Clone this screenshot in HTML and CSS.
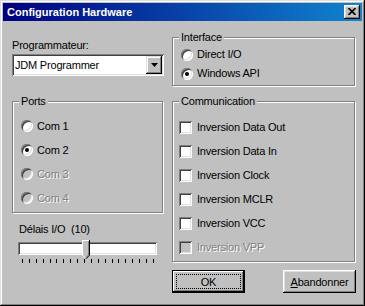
FILE: index.html
```html
<!DOCTYPE html>
<html lang="fr">
<head>
  <meta charset="UTF-8" />
  <title>Configuration Hardware</title>
  <link rel="stylesheet" href="styles.css">
</head>
<body>
<div class="window">
  <div class="titlebar">
    <span class="title">Configuration Hardware</span>
    <span class="close-btn">
      <svg width="8" height="7" viewBox="0 0 8 7"><path d="M0.5 0 L7.5 7 M7.5 0 L0.5 7" stroke="#000" stroke-width="1.7"/></svg>
    </span>
  </div>
  <div class="content">
    <div class="col-left">
      <div class="prog-label">Programmateur:</div>
      <div class="combo">
        <span class="combo-text">JDM Programmer</span>
        <span class="combo-btn">
          <svg width="7" height="4" viewBox="0 0 7 4"><path d="M0 0h7L3.5 4z" fill="#000"/></svg>
        </span>
      </div>
      <div class="group ports">
        <span class="legend">Ports</span>
        <div class="options">
          <div class="opt"><span class="radio"></span>Com 1</div>
          <div class="opt"><span class="radio checked"></span>Com 2</div>
          <div class="opt disabled"><span class="radio"></span>Com 3</div>
          <div class="opt disabled"><span class="radio"></span>Com 4</div>
        </div>
      </div>
      <div class="delay-label">Délais I/O&nbsp; (10)</div>
      <div class="slider-track">
        <svg class="thumb" width="8" height="19" viewBox="0 0 8 19">
          <path d="M0 0H8V15L4 19L0 15Z" fill="#c0c0c0"/>
          <path d="M0.5 15V0.5H7" stroke="#fff" fill="none"/>
          <path d="M6.5 1V15L3.5 18" stroke="#808080" fill="none"/>
          <path d="M7.5 0V15.2L4 18.7" stroke="#000" fill="none"/>
          <path d="M0.5 15L3.5 18" stroke="#fff" fill="none"/>
        </svg>
      </div>
      <div class="ticks">
        <span></span><span></span><span></span><span></span><span></span>
        <span></span><span></span><span></span><span></span><span></span>
        <span></span><span></span><span></span><span></span><span></span>
        <span></span><span></span><span></span><span></span><span></span>
      </div>
    </div>
    <div class="col-right">
      <div class="group interface">
        <span class="legend">Interface</span>
        <div class="options">
          <div class="opt"><span class="radio"></span>Direct I/O</div>
          <div class="opt"><span class="radio checked"></span>Windows API</div>
        </div>
      </div>
      <div class="group communication">
        <span class="legend">Communication</span>
        <div class="options">
          <div class="opt"><span class="check"></span>Inversion Data Out</div>
          <div class="opt"><span class="check"></span>Inversion Data In</div>
          <div class="opt"><span class="check"></span>Inversion Clock</div>
          <div class="opt"><span class="check"></span>Inversion MCLR</div>
          <div class="opt"><span class="check"></span>Inversion VCC</div>
          <div class="opt disabled"><span class="check"></span>Inversion VPP</div>
        </div>
      </div>
      <div class="buttons">
        <div class="btn default"><span class="focus">OK</span></div>
        <div class="btn"><span><u>A</u>bandonner</span></div>
      </div>
    </div>
  </div>
</div>
</body>
</html>
```

FILE: styles.css
```css
body {
  margin: 0;
  font-family: "Liberation Sans", Arial, sans-serif;
  font-size: 11px;
  letter-spacing: -0.2px;
  color: #000;
}
.window {
  width: 365px;
  height: 306px;
  box-sizing: border-box;
  padding: 3px;
  background: #c0c0c0;
  box-shadow: inset -1px -1px #000, inset 1px 1px #dfdfdf, inset -2px -2px #808080, inset 2px 2px #fff;
}
.titlebar {
  height: 18px;
  display: flex;
  align-items: center;
  justify-content: space-between;
  background: linear-gradient(90deg, #000080, #1084d0);
  padding: 0 2px 0 4px;
}
.title {
  color: #fff;
  font-weight: 700;
  letter-spacing: 0;
  line-height: 18px;
}
.close-btn {
  width: 16px;
  height: 14px;
  box-sizing: border-box;
  display: flex;
  align-items: center;
  justify-content: center;
  padding: 0 1px 1px 0;
  background: #c0c0c0;
  box-shadow: inset -1px -1px #000, inset 1px 1px #fff, inset -2px -2px #808080, inset 2px 2px #dfdfdf;
}
.content {
  display: flex;
  gap: 8px;
  padding: 0 6px 0 9px;
}
.col-left {
  width: 152px;
  display: flex;
  flex-direction: column;
}
.col-right {
  width: 184px;
  display: flex;
  flex-direction: column;
}
.prog-label {
  line-height: 13px;
  margin-top: 18px;
}
.combo {
  margin-top: 2px;
  height: 22px;
  box-sizing: border-box;
  padding: 2px;
  display: flex;
  align-items: center;
  justify-content: space-between;
  background: #fff;
  box-shadow: inset 1px 1px #808080, inset -1px -1px #fff, inset 2px 2px #404040, inset -2px -2px #dfdfdf;
}
.combo-text {
  padding-left: 1px;
  line-height: 13px;
}
.combo-btn {
  width: 16px;
  height: 18px;
  box-sizing: border-box;
  display: flex;
  align-items: center;
  justify-content: center;
  background: #c0c0c0;
  box-shadow: inset -1px -1px #000, inset 1px 1px #dfdfdf, inset -2px -2px #808080, inset 2px 2px #fff;
}

/* group boxes */
.group {
  box-sizing: border-box;
  border: 1px solid #808080;
  box-shadow: inset 1px 1px #fff, 1px 1px #fff;
}
.legend {
  display: block;
  width: fit-content;
  margin: -7px 0 0 6px;
  padding: 0 2px;
  line-height: 13px;
  background: #c0c0c0;
}
.opt {
  display: flex;
  align-items: center;
  line-height: 13px;
}
.ports {
  margin-top: 25px;
  width: 151px;
  height: 112px;
}
.ports .options {
  margin-top: 6px;
  padding-left: 8px;
}
.ports .opt {
  height: 24px;
}
.interface {
  margin-top: 16px;
  height: 49px;
  width: 183px;
}
.interface .options {
  margin-top: 1px;
  padding-left: 8px;
}
.interface .opt {
  height: 19px;
}
.communication {
  margin-top: 15px;
  height: 161px;
  width: 183px;
}
.communication .options {
  margin-top: 7px;
  padding-left: 6px;
}
.communication .opt {
  height: 24px;
}

.radio {
  width: 12px;
  height: 12px;
  flex: none;
  margin-right: 4px;
  border-radius: 50%;
  display: flex;
  align-items: center;
  justify-content: center;
  background: #fff;
  box-shadow: inset 1px 1px #808080, inset -1px -1px #fff, inset 2px 2px #404040, inset -2px -2px #dfdfdf;
}
.radio.checked::after {
  content: "";
  width: 4px;
  height: 4px;
  border-radius: 50%;
  background: #000;
}
.check {
  width: 13px;
  height: 13px;
  flex: none;
  margin-right: 5px;
  background: #fff;
  box-shadow: inset 1px 1px #808080, inset -1px -1px #fff, inset 2px 2px #404040, inset -2px -2px #dfdfdf;
}
.disabled {
  color: #808080;
  text-shadow: 1px 1px #fff;
}
.disabled .radio,
.disabled .check {
  background: #c0c0c0;
}

/* slider */
.delay-label {
  margin: 10px 0 0 7px;
  line-height: 13px;
}
.slider-track {
  position: relative;
  margin: 6px 0 0 6px;
  width: 139px;
  height: 13px;
  background: #fff;
  box-shadow: inset 1px 1px #808080, inset -1px -1px #fff, inset 2px 2px #404040, inset -2px -2px #dfdfdf;
}
.thumb {
  position: absolute;
  left: 64px;
  top: -2px;
}
.ticks {
  margin: 4px 0 0 10px;
  width: 132px;
  display: flex;
  justify-content: space-between;
}
.ticks span {
  width: 1px;
  height: 4px;
  background: #000;
}

/* buttons */
.buttons {
  margin-top: 8px;
  display: flex;
  justify-content: space-between;
}
.btn {
  width: 73px;
  height: 23px;
  box-sizing: border-box;
  display: flex;
  align-items: center;
  justify-content: center;
  background: #c0c0c0;
  box-shadow: inset -1px -1px #000, inset 1px 1px #fff, inset -2px -2px #808080, inset 2px 2px #dfdfdf;
}
.btn.default {
  border: 1px solid #000;
  padding: 3px;
  box-shadow: inset -1px -1px #000, inset 1px 1px #fff, inset -2px -2px #808080;
}
.focus {
  flex: 1;
  align-self: stretch;
  display: flex;
  align-items: center;
  justify-content: center;
  border: 1px dotted #000;
}
```
